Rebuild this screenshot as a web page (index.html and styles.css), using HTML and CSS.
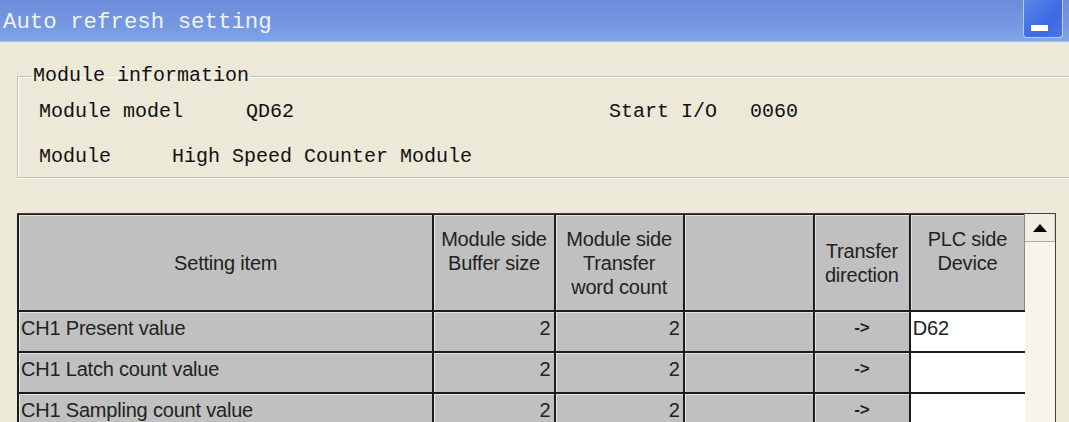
FILE: index.html
```html
<!DOCTYPE html>
<html lang="en">
<head>
    <meta charset="UTF-8">
    <meta name="viewport" content="width=device-width, initial-scale=1.0">
    <link rel="stylesheet" href="styles.css">
</head>
<body>
    <div class="titlebar">
        <span class="title">Auto refresh setting</span>
        <div class="min-btn"><span class="min-bar"></span></div>
    </div>

    <fieldset class="module-info">
        <legend>Module information</legend>
        <div class="info-row">
            <span class="label">Module model</span>
            <span class="value model">QD62</span>
            <span class="label start">Start I/O</span>
            <span class="value">0060</span>
        </div>
        <div class="info-row">
            <span class="label short">Module</span>
            <span class="value">High Speed Counter Module</span>
        </div>
    </fieldset>

    <div class="grid-box">
        <table class="grid">
            <tr class="head">
                <th class="c-item">Setting item</th>
                <th class="c-buf top">Module side<br>Buffer size</th>
                <th class="c-cnt">Module side<br>Transfer<br>word count</th>
                <th class="c-blank"></th>
                <th class="c-dir">Transfer<br>direction</th>
                <th class="c-dev top">PLC side<br>Device</th>
            </tr>
            <tr>
                <td>CH1 Present value</td>
                <td class="num">2</td>
                <td class="num">2</td>
                <td></td>
                <td class="arrow">-&gt;</td>
                <td class="edit">D62</td>
            </tr>
            <tr>
                <td>CH1 Latch count value</td>
                <td class="num">2</td>
                <td class="num">2</td>
                <td></td>
                <td class="arrow">-&gt;</td>
                <td class="edit"></td>
            </tr>
            <tr>
                <td>CH1 Sampling count value</td>
                <td class="num">2</td>
                <td class="num">2</td>
                <td></td>
                <td class="arrow">-&gt;</td>
                <td class="edit"></td>
            </tr>
        </table>
        <div class="scrollbar">
            <div class="scroll-up">
                <svg width="14" height="8" viewBox="0 0 14 8"><polygon points="7,0 14,8 0,8" fill="#000"/></svg>
            </div>
            <div class="scroll-track"></div>
        </div>
    </div>
</body>
</html>
```

FILE: styles.css
```css
body {
    margin: 0;
    background-color: #ece9d8;
    overflow: hidden;
    height: 422px;
}

.titlebar {
    height: 41px;
    display: flex;
    align-items: flex-start;
    justify-content: space-between;
    background: linear-gradient(#6d8cdb, #7597e0 60%, #7fa6e8);
    border-bottom: 1px solid #a9bfe6;
}

.title {
    font-family: "Liberation Mono", monospace;
    font-size: 22.4px;
    color: #eef2fb;
    padding: 8px 0 0 3px;
    line-height: 28px;
}

.min-btn {
    width: 38px;
    height: 37px;
    margin: 0 6px 0 0;
    border: 1px solid #b7c8ef;
    border-top: none;
    border-radius: 0 0 4px 4px;
    background: linear-gradient(135deg, #5a86ea, #3c69e2 60%, #4a76e6);
    display: flex;
    align-items: flex-end;
    justify-content: flex-start;
}

.min-bar {
    width: 17px;
    height: 6px;
    margin: 0 0 6px 7px;
    background: #ffffff;
}

.module-info {
    margin: 23px -40px 0 17px;
    padding: 13px 0 12px 22px;
    border: 1px solid #c5c2b2;
    box-shadow: 1px 1px 0 #ffffff inset, 1px 1px 0 #ffffff;
    height: 86px;
    font-family: "Liberation Mono", monospace;
    font-size: 20px;
    color: #111;
}

.module-info legend {
    padding: 0 1px;
    margin-left: -8px;
    font-size: 20px;
    line-height: 22px;
}

.info-row {
    display: flex;
    height: 45px;
    align-items: flex-start;
    margin-left: -1px;
}

.label {
    width: 207px;
}

.label.short {
    width: 133px;
}

.value.model {
    width: 363px;
}

.label.start {
    width: 141px;
}

.grid-box {
    margin: 35px 0 0 17px;
    width: 1038px;
    display: flex;
    border-top: 1px solid #404040;
    border-right: 1px solid #404040;
}

.grid {
    border-collapse: collapse;
    table-layout: fixed;
    width: 1008px;
    font-family: "Liberation Sans", Arial, sans-serif;
    font-size: 20px;
    color: #222;
    letter-spacing: -0.2px;
}

.grid th,
.grid td {
    border: 2px solid #1c1c1c;
    background-color: #c0c0c0;
    box-shadow: 1px 1px 0 #e4e4e4 inset;
    padding: 0 2px;
    line-height: 24px;
}

.grid th {
    font-weight: normal;
    height: 95px;
    text-align: center;
    vertical-align: middle;
}

.grid th.top {
    height: 71px;
    padding-bottom: 24px;
}

.grid td {
    height: 35px;
    vertical-align: top;
    padding-top: 4px;
    white-space: nowrap;
}

.grid tr:first-child th {
    border-top: 1px solid #1c1c1c;
}

.c-item { width: 409px; }
.c-buf { width: 115px; }
.c-cnt { width: 123px; }
.c-blank { width: 124px; }
.c-dir { width: 90px; }
.c-dev { width: 109px; }

.grid td.num {
    text-align: right;
    padding-right: 3px;
}

.grid td.arrow {
    text-align: center;
    font-weight: bold;
    font-size: 17px;
}

.grid td.edit {
    background-color: #ffffff;
    box-shadow: none;
    border-right: none;
}

.grid th.c-dev {
    border-right: 1px solid #8a8a8a;
}

.scrollbar {
    width: 30px;
    display: flex;
    flex-direction: column;
}

.scroll-up {
    height: 27px;
    background-color: #f1efe4;
    border-bottom: 1px solid #b0ad9c;
    border-right: 1px solid #d8d5c6;
    display: flex;
    align-items: center;
    justify-content: center;
}

.scroll-track {
    flex: 1;
    background-color: #f6f4ec;
}
```
